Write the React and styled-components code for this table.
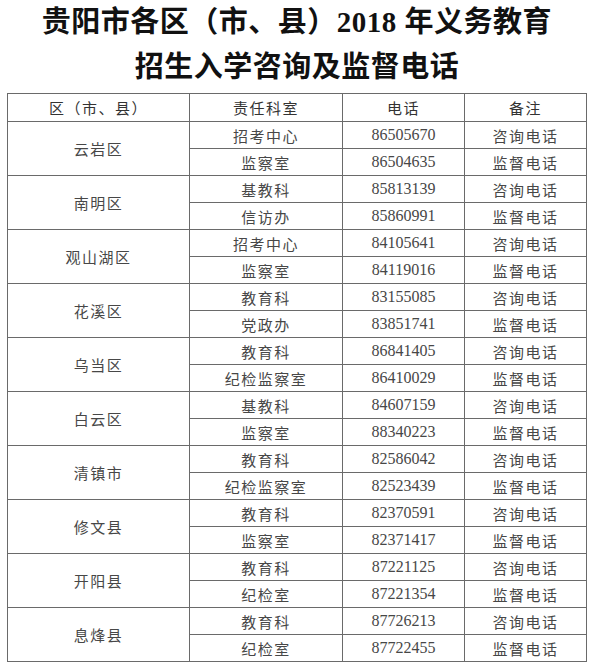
import React from 'react';
import styled, { createGlobalStyle } from 'styled-components';

const GlobalStyle = createGlobalStyle`
    body {
        margin : 0;
        background : #fff;
    }
`;

const Page = styled.div`
    width : 594px;
    height : 672px;
    overflow : hidden;
    background : #fff;
`;

// 标题两行
const Title = styled.h1`
    margin : 0;
    font-family : "Liberation Serif", "Noto Sans CJK SC", serif;
    font-weight : 700;
    font-size : 29px;
    line-height : 45px;
    text-align : center;
    color : #111;
    letter-spacing : 0.5px;
`;

const Table = styled.table`
    margin : 3px 0 0 7px;
    width : 579px;
    border-collapse : collapse;
    table-layout : fixed;
    border : 1px solid #8a8a8a;
    color : #474747;
`;

const HeadRow = styled.tr`
    height : 28px;
`;

const Row = styled.tr`
    height : 27px;
`;

const Cell = styled.td`
    border : 1px solid #6a6a6a;
    padding : 0;
    text-align : center;
    vertical-align : middle;
    line-height : 1;
    letter-spacing : ${props => props.$num ? '0' : '1.5px'};
    font-family : ${props => props.$num ? '"Liberation Serif", serif' : '"Noto Sans CJK SC", sans-serif'};
    font-size : ${props => props.$num ? '16px' : '15px'};
`;

const HeadCell = styled(Cell).attrs({ as: 'th' })`
    font-weight : 400;
    color : #333;
`;

const data = [
    ['云岩区', [['招考中心', '86505670', '咨询电话'], ['监察室', '86504635', '监督电话']]],
    ['南明区', [['基教科', '85813139', '咨询电话'], ['信访办', '85860991', '监督电话']]],
    ['观山湖区', [['招考中心', '84105641', '咨询电话'], ['监察室', '84119016', '监督电话']]],
    ['花溪区', [['教育科', '83155085', '咨询电话'], ['党政办', '83851741', '监督电话']]],
    ['乌当区', [['教育科', '86841405', '咨询电话'], ['纪检监察室', '86410029', '监督电话']]],
    ['白云区', [['基教科', '84607159', '咨询电话'], ['监察室', '88340223', '监督电话']]],
    ['清镇市', [['教育科', '82586042', '咨询电话'], ['纪检监察室', '82523439', '监督电话']]],
    ['修文县', [['教育科', '82370591', '咨询电话'], ['监察室', '82371417', '监督电话']]],
    ['开阳县', [['教育科', '87221125', '咨询电话'], ['纪检室', '87221354', '监督电话']]],
    ['息烽县', [['教育科', '87726213', '咨询电话'], ['纪检室', '87722455', '监督电话']]],
];

const App = () => {
    return (
        <Page>
            <GlobalStyle />
            <Title>
                贵阳市各区（市、县）2018 年义务教育<br />
                招生入学咨询及监督电话
            </Title>
            <Table>
                <colgroup>
                    <col style={{ width: 182 }} />
                    <col style={{ width: 153 }} />
                    <col style={{ width: 122 }} />
                    <col style={{ width: 122 }} />
                </colgroup>
                <thead>
                    <HeadRow>
                        <HeadCell>区（市、县）</HeadCell>
                        <HeadCell>责任科室</HeadCell>
                        <HeadCell>电话</HeadCell>
                        <HeadCell>备注</HeadCell>
                    </HeadRow>
                </thead>
                <tbody>
                    {data.map(([area, rows]) => rows.map((r, i) => (
                        <Row key={area + i}>
                            {i === 0 && <Cell rowSpan={2}>{area}</Cell>}
                            <Cell>{r[0]}</Cell>
                            <Cell $num>{r[1]}</Cell>
                            <Cell>{r[2]}</Cell>
                        </Row>
                    )))}
                </tbody>
            </Table>
        </Page>
    );
};

export default App;
